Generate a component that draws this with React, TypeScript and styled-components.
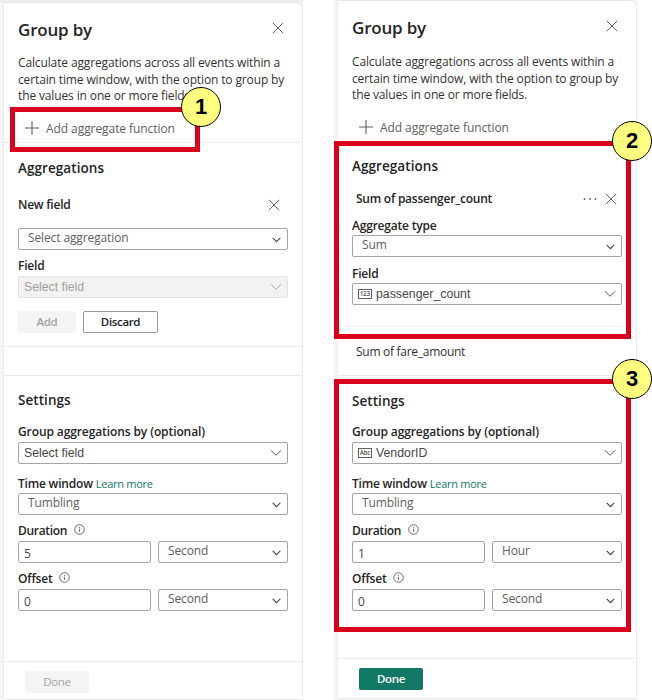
import React from "react";
import styled, { createGlobalStyle, css } from "styled-components";

const GlobalStyle = createGlobalStyle`
  *, *::before, *::after { box-sizing: border-box; }
  body { margin: 0; background: #fff; font-family: "Open Sans", "Noto Sans", sans-serif; }
  h2, h3, p { margin: 0; }
`;

const Page = styled.main`
  position: relative;
  display: flex;
  gap: 31px;
  width: 652px;
  height: 700px;
  overflow: hidden;
  background: #fff;
`;

const Frame = styled.div<{ $top: number; $bottom: number }>`
  width: 303px;
  height: 700px;
  padding: ${p => p.$top}px 1px ${p => p.$bottom}px 4px;
  background: linear-gradient(#efefef 0 ${p => p.$top}px, #f6f6f6 ${p => p.$top}px);
`;

const Panel = styled.section`
  height: 100%;
  display: flex;
  flex-direction: column;
  background: #fff;
  border-top-right-radius: 6px;
  box-shadow: 0 0 2px rgba(0, 0, 0, 0.18);
  color: #242424;
`;

const Header = styled.header<{ $height: number }>`
  display: flex;
  justify-content: space-between;
  height: ${p => p.$height}px;
  padding: 14px 18px 0 14px;
`;

const Title = styled.h2`
  font-size: 17px;
  line-height: 26px;
  font-weight: 600;
  letter-spacing: -0.2px;
`;

const IconButton = styled.button`
  display: flex;
  align-items: center;
  justify-content: center;
  width: 13px;
  height: 21px;
  padding: 0;
  border: 0;
  background: none;
  color: #484644;
`;

const Description = styled.p`
  height: 50px;
  padding: 0 14px;
  font-size: 12px;
  line-height: 16.5px;
  letter-spacing: -0.13px;
  white-space: nowrap;
  color: #323130;
`;

const AddFunction = styled.button<{ $height: number }>`
  display: flex;
  align-items: flex-start;
  gap: 7px;
  height: ${p => p.$height}px;
  padding: 14px 0 0 21px;
  border: 0;
  background: none;
  font: 400 12px/20px "Open Sans", sans-serif;
  letter-spacing: -0.07px;
  color: #605e5c;
  svg { margin-top: 2px; }
`;

const Section = styled.section<{ $height: number; $line?: string }>`
  display: flex;
  flex-direction: column;
  height: ${p => p.$height}px;
  padding: 0 14px;
  border-top: 1px solid ${p => p.$line ?? "#ebebeb"};
`;

const Heading = styled.h3<{ $top: number }>`
  margin-top: ${p => p.$top}px;
  font-size: 13.5px;
  line-height: 20px;
  font-weight: 600;
  letter-spacing: 0.06px;
`;

const FieldHead = styled.div<{ $top: number; $indent?: number; $right: number }>`
  display: flex;
  align-items: center;
  margin-top: ${p => p.$top}px;
  padding: 0 ${p => p.$right}px 0 ${p => p.$indent ?? 0}px;
  height: 20px;
  gap: 8px;
  color: #484644;
  svg { flex: none; }
`;

const Strong = styled.span`
  flex: 1;
  font-size: 12px;
  line-height: 20px;
  font-weight: 600;
  letter-spacing: -0.24px;
  color: #242424;
`;

const Summary = styled.p`
  margin-top: 15px;
  padding-left: 4px;
  font-size: 12px;
  line-height: 20px;
  letter-spacing: -0.28px;
  color: #323130;
`;

const Label = styled.label<{ $top: number; $spacing?: number }>`
  display: flex;
  align-items: center;
  height: 16px;
  margin-top: ${p => p.$top}px;
  font-size: 12px;
  font-weight: 600;
  letter-spacing: ${p => p.$spacing ?? -0.2}px;
  white-space: pre;
`;

const InfoSlot = styled.span`
  display: flex;
  margin: -2px 0 0 7px;
`;

const Link = styled.a`
  margin-left: 3px;
  font-size: 11px;
  font-weight: 400;
  letter-spacing: -0.26px;
  color: #117865;
`;

const controlFrame = css`
  display: flex;
  align-items: center;
  height: 22px;
  border: 1px solid #a6a4a2;
  border-radius: 2px;
  background: #fff;
  color: #484644;
`;

const Dropdown = styled.div<{ $top?: number; $width?: number }>`
  ${controlFrame}
  width: ${p => p.$width ?? 270}px;
  margin-top: ${p => p.$top ?? 0}px;
  padding: 0 6px 0 9px;
  font-size: 12px;
  letter-spacing: -0.12px;
  justify-content: space-between;
  > span { line-height: 16px; margin-top: -3px; color: #605e5c; }
  > svg { margin-top: 2px; }
`;

const Combo = styled.div<{ $top?: number; $disabled?: boolean }>`
  ${controlFrame}
  width: 270px;
  margin-top: ${p => p.$top ?? 0}px;
  padding: 0 5px;
  gap: 4px;
  font: 12.3px/18px "Liberation Sans", Arial, sans-serif;
  > span { flex: 1; }
  ${p => p.$disabled && css`
    border-color: #e6e4e2;
    background: #f3f2f1;
    color: #a19f9d;
  `}
`;

const Input = styled.input`
  ${controlFrame}
  width: 133px;
  padding: 2px 5px 0;
  font: 12px/18px "Open Sans", sans-serif;
  outline: 0;
`;

const Pair = styled.div<{ $top: number }>`
  display: flex;
  justify-content: space-between;
  width: 270px;
  margin-top: ${p => p.$top}px;
`;

const Actions = styled.div`
  display: flex;
  gap: 7px;
  margin-top: 13px;
`;

const Button = styled.button<{ $kind: "muted" | "outline" | "primary"; $width: number; $bold?: boolean }>`
  width: ${p => p.$width}px;
  height: 22px;
  padding: 0;
  border-radius: 2px;
  font: ${p => (p.$bold ? 600 : 400)} 11.5px/18px "Open Sans", sans-serif;
  letter-spacing: -0.35px;
  ${p => p.$kind === "muted" && css`border: 0; background: #f4f4f4; color: #a6a4a2;`}
  ${p => p.$kind === "outline" && css`border: 1px solid #9a9896; background: #fff; color: #201f1e;`}
  ${p => p.$kind === "primary" && css`border: 0; background: #117865; color: #fff;`}
`;

const Footer = styled.footer`
  display: flex;
  align-items: flex-start;
  flex: 1;
  padding: 9px 21px 0;
  border-top: 1px solid #ebebeb;
`;

const Highlight = styled.div<{ $x: number; $y: number; $w: number; $h: number }>`
  position: absolute;
  left: ${p => p.$x}px;
  top: ${p => p.$y}px;
  width: ${p => p.$w}px;
  height: ${p => p.$h}px;
  border: 5px solid #d9001b;
`;

const Badge = styled.div<{ $x: number; $y: number }>`
  position: absolute;
  left: ${p => p.$x}px;
  top: ${p => p.$y}px;
  display: flex;
  align-items: center;
  justify-content: center;
  width: 40px;
  height: 40px;
  border: 1px solid #000;
  border-radius: 50%;
  background: #ffff80;
  color: #000;
  font: 700 22px/24px "Liberation Sans", Arial, sans-serif;
`;

const CloseIcon = () => (
  <svg width="12" height="12" viewBox="0 0 12 12" fill="none" stroke="currentColor">
    <path d="M.8.8l10.4 10.4M11.2.8L.8 11.2" strokeWidth=".85" />
  </svg>
);

const PlusIcon = () => (
  <svg width="14" height="14" viewBox="0 0 14 14" fill="none" stroke="currentColor">
    <path d="M7 0v14M0 7h14" strokeWidth="1.1" />
  </svg>
);

const MoreIcon = () => (
  <svg width="14" height="12" viewBox="0 0 14 12" fill="#605e5c">
    <circle cx="1.5" cy="6" r=".9" />
    <circle cx="7" cy="6" r=".9" />
    <circle cx="12.5" cy="6" r=".9" />
  </svg>
);

const Chevron = ({ wide }: { wide?: boolean }) =>
  wide ? (
    <svg width="12" height="8" viewBox="0 0 12 8" fill="none" stroke="currentColor">
      <path d="M1 1.3l5 5 5-5" strokeWidth=".9" />
    </svg>
  ) : (
    <svg width="9" height="6" viewBox="0 0 9 6" fill="none" stroke="currentColor">
      <path d="M.7.8l3.8 3.8L8.3.8" strokeWidth="1.1" />
    </svg>
  );

const InfoIcon = () => (
  <svg width="11" height="11" viewBox="0 0 11 11" fill="none" stroke="#605e5c">
    <circle cx="5.5" cy="5.5" r="4.8" strokeWidth=".9" />
    <path d="M5.5 4.7v3.2M5.5 2.8v1" strokeWidth=".9" />
  </svg>
);

const TypeIcon = ({ label }: { label: string }) => (
  <svg width="14" height="10" viewBox="0 0 14 10">
    <rect x=".5" y=".5" width="13" height="9" fill="#fff" stroke="#605e5c" />
    <text x="7" y="7.3" textAnchor="middle" fontSize="6.2" fontWeight="600" fontFamily="Open Sans, sans-serif" fill="#484644" textLength="10" lengthAdjust="spacingAndGlyphs">
      {label}
    </text>
  </svg>
);

const Intro = ({ headerHeight, addHeight }: { headerHeight: number; addHeight: number }) => (
  <>
    <Header $height={headerHeight}>
      <Title>Group by</Title>
      <IconButton aria-label="Close"><CloseIcon /></IconButton>
    </Header>
    <Description>
      Calculate aggregations across all events within a<br />
      certain time window, with the option to group by<br />
      the values in one or more fields.
    </Description>
    <AddFunction $height={addHeight}><PlusIcon />Add aggregate function</AddFunction>
  </>
);

const TimeRow = ({ label, value, unit, top }: { label: string; value: string; unit: string; top: number }) => (
  <>
    <Label $top={top} $spacing={label === "Offset" ? -0.2 : -0.32}>
      {label}<InfoSlot><InfoIcon /></InfoSlot>
    </Label>
    <Pair $top={3}>
      <Input defaultValue={value} />
      <Dropdown $width={130}><span>{unit}</span><Chevron /></Dropdown>
    </Pair>
  </>
);

export default function App() {
  return (
    <>
      <GlobalStyle />
      <Page>
        <Frame $top={3} $bottom={1}>
          <Panel>
            <Intro headerHeight={52} addHeight={37} />
            <Section $height={204}>
              <Heading $top={15}>Aggregations</Heading>
              <FieldHead $top={17} $right={8}>
                <Strong>New field</Strong>
                <CloseIcon />
              </FieldHead>
              <Dropdown $top={13}><span>Select aggregation</span><Chevron /></Dropdown>
              <Label $top={7}>Field</Label>
              <Combo $top={3} $disabled><span>Select field</span><Chevron wide /></Combo>
              <Actions>
                <Button $kind="muted" $width={58} $bold>Add</Button>
                <Button $kind="outline" $width={75} $bold>Discard</Button>
              </Actions>
            </Section>
            <Section $height={29} />
            <Section $height={286}>
              <Heading $top={14}>Settings</Heading>
              <Label $top={13} $spacing={-0.1}>Group aggregations by (optional)</Label>
              <Combo $top={3}><span>Select field</span><Chevron wide /></Combo>
              <Label $top={11}>Time window<Link>Learn more</Link></Label>
              <Dropdown $top={2}><span>Tumbling</span><Chevron /></Dropdown>
              <TimeRow label="Duration" value="5" unit="Second" top={7} />
              <TimeRow label="Offset" value="0" unit="Second" top={7} />
            </Section>
            <Footer><Button $kind="muted" $width={64}>Done</Button></Footer>
          </Panel>
        </Frame>

        <Frame $top={1} $bottom={2}>
          <Panel>
            <Intro headerHeight={53} addHeight={37} />
            <Section $height={185}>
              <Heading $top={14}>Aggregations</Heading>
              <FieldHead $top={13} $indent={4} $right={5}>
                <Strong>Sum of passenger_count</Strong>
                <MoreIcon />
                <CloseIcon />
              </FieldHead>
              <Label $top={8}>Aggregate type</Label>
              <Dropdown $top={2}><span>Sum</span><Chevron /></Dropdown>
              <Label $top={8}>Field</Label>
              <Combo $top={2}><TypeIcon label="123" /><span>passenger_count</span><Chevron wide /></Combo>
            </Section>
            <Section $height={49} $line="#f3f3f3"><Summary>Sum of fare_amount</Summary></Section>
            <Section $height={283}>
              <Heading $top={15}>Settings</Heading>
              <Label $top={12} $spacing={-0.1}>Group aggregations by (optional)</Label>
              <Combo $top={3}><TypeIcon label="Abc" /><span>VendorID</span><Chevron wide /></Combo>
              <Label $top={11}>Time window<Link>Learn more</Link></Label>
              <Dropdown $top={2}><span>Tumbling</span><Chevron /></Dropdown>
              <TimeRow label="Duration" value="1" unit="Hour" top={7} />
              <TimeRow label="Offset" value="0" unit="Second" top={7} />
            </Section>
            <Footer><Button $kind="primary" $width={64} $bold>Done</Button></Footer>
          </Panel>
        </Frame>

        <Highlight $x={10} $y={107} $w={190} $h={45} />
        <Highlight $x={334} $y={141} $w={297} $h={198} />
        <Highlight $x={334} $y={379} $w={297} $h={253} />
        <Badge $x={181} $y={87}>1</Badge>
        <Badge $x={612} $y={121}>2</Badge>
        <Badge $x={612} $y={359}>3</Badge>
      </Page>
    </>
  );
}
